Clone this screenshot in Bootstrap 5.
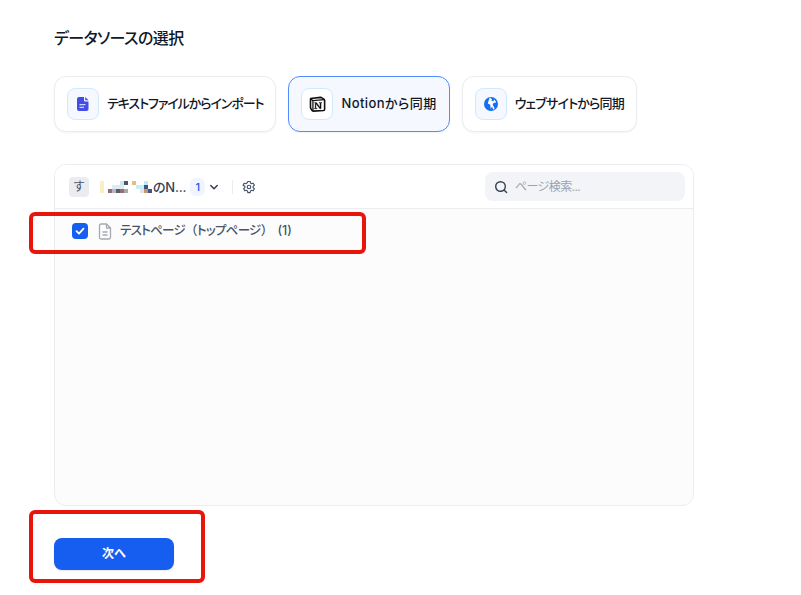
<!DOCTYPE html>
<html lang="ja">
<head>
<meta charset="utf-8">
<title>データソースの選択</title>
<link rel="stylesheet" href="https://cdn.jsdelivr.net/npm/bootstrap@5.3.0/dist/css/bootstrap.min.css">
<style>
html,body{height:100%;overflow:hidden}
body{background:#fff;color:#101828;font-family:Inter,"Noto Sans CJK JP",sans-serif;position:relative;font-feature-settings:"palt"}
.page-wrap{padding:26px 0 0 54px}
.ds-title{font-size:16px;line-height:24px;font-weight:500;color:#101828;margin:0 0 26px;letter-spacing:-.55px}
.ds-options{gap:12px;margin-bottom:32px}
.ds-card{height:56px;padding:0 12px;background:#fff;border:1px solid #eaecf0;border-radius:12px;box-shadow:0 1px 2px rgba(16,24,40,.05);font-size:13px;font-weight:500;color:#101828;gap:8px;white-space:nowrap}
.ds-card.is-active{background:#f5f8ff;border-color:#528bff}
.spc-file{letter-spacing:-1.070px}
.spc-notion{letter-spacing:.42px}
.spc-web{letter-spacing:-.8px}
.ds-ico{width:32px;height:32px;border:1px solid #d1e9ff;border-radius:8px;background:#f5f8ff}
.ds-card.is-active .ds-ico{background:#fff}
.ds-panel{width:640px;height:342px;border:1px solid #eaecf0;border-radius:12px;background:#fcfcfd;overflow:hidden}
.ds-head{height:44px;background:#fff;border-bottom:1px solid #eaecf0;padding:0 8px 0 14px}
.ds-avatar{width:20px;height:20px;border-radius:4px;background:#eaecf0;color:#475467;font-size:12px;line-height:20px;text-align:center}
.ds-name{font-size:13px;font-weight:500;color:#344054;margin-left:11px;line-height:20px;letter-spacing:-.2px}
.ds-count{width:15px;height:18px;border-radius:6px;background:#eff4ff;color:#155eef;font-size:11px;font-weight:500;line-height:18px;text-align:center;margin-left:4px}
.ds-chev{margin-left:3px}
.ds-sep{width:1px;height:14px;background:#eaecf0;margin:0 9px 0 12px}
.ds-search{width:200px;height:29px;background:#f2f4f7;border-radius:8px;padding:0 9px;gap:7px;margin-left:auto;color:#98a2b3;font-size:12px;letter-spacing:-.6px}
.ds-row{height:44px;padding:0 0 0 17px;font-size:12.500px;font-weight:500;color:#475467;white-space:nowrap}
.ds-label{letter-spacing:-.7px}
.ds-fw{font-feature-settings:normal}
.ds-num{margin-left:5px}
.ds-check{width:16px;height:16px;border-radius:4px;background:#155eef;margin-right:10px}
.ds-next{width:120px;height:32px;background:#155eef;border:0;border-radius:8px;color:#fff;font-size:12px;font-weight:600;padding:0;margin-top:32px;box-shadow:0 1px 2px rgba(16,24,40,.1)}
.ds-next:hover{background:#155eef;color:#fff}
.mark-box{position:absolute;border:4px solid #e8150a;border-radius:6px;pointer-events:none}
.mark-row{left:29px;top:212px;width:337px;height:42px}
.mark-btn{left:29px;top:510px;width:176px;height:73px}
</style>
</head>
<body>
<div class="page-wrap">
  <h1 class="ds-title">データソースの選択</h1>
  <div class="d-flex ds-options">
    <div class="ds-card d-flex align-items-center">
      <span class="ds-ico d-flex align-items-center justify-content-center">
        <svg width="14" height="16" viewBox="0 0 14 16"><path fill="#444ce7" d="M3 1h5v3.200c0 .7.6 1.300 1.300 1.300H12.500V13a2 2 0 0 1-2 2H3a2 2 0 0 1-2-2V3a2 2 0 0 1 2-2z"/><path fill="#444ce7" d="M9.200 1l3.300 3.300H9.200z"/><path fill="#c7d7fe" d="M3.500 8h6v1.300h-6zM3.500 10.800h4.500v1.300H3.500z"/></svg>
      </span>
      <span class="spc-file">テキストファイルからインポート</span>
    </div>
    <div class="ds-card is-active d-flex align-items-center">
      <span class="ds-ico d-flex align-items-center justify-content-center">
        <svg width="17" height="17" viewBox="0 0 16 16"><path fill="#fff" stroke="#111" stroke-width="1.500" stroke-linejoin="round" d="M1.500 2.300 10.800 1.300c.6 0 1 .1 1.400.4l2 1.400c.4.300.5.500.5.900v8.400c0 .7-.3 1.100-1 1.200l-9.500.6c-.5 0-.8-.1-1.100-.4l-1.300-1.800c-.3-.4-.4-.7-.4-1.100V3.200c0-.5.200-.8.600-.9z"/><path fill="none" stroke="#111" stroke-width="1.200" d="M1.500 2.500 3.500 4.300 14.500 3.500M3.700 4.500V14"/><path fill="#111" stroke="#111" stroke-width=".3" d="M5.300 6h1.800l3.200 4.700V6.600l-.9-.1V6h2.800v.5l-.8.1V12h-1.200L6.600 7.500v3.900l1 .2v.5H5v-.5l.8-.2V6.600l-.5-.1z"/></svg>
      </span>
      <span class="spc-notion">Notionから同期</span>
    </div>
    <div class="ds-card d-flex align-items-center">
      <span class="ds-ico d-flex align-items-center justify-content-center">
        <svg width="16" height="16" viewBox="0 0 16 16"><circle cx="8" cy="8" r="7" fill="#1570ef"/><path fill="#fff" d="M6.800 1.500 9 3.200 8.400 5l2 .3.700-1.800 1.600 1.700.4 1.300-2.200.3-1.300 1.800 2 4-1.300 1.100-1.300-3.100-1.300 2.400-.4-4.200-2.500-1.200L5.500 5z"/></svg>
      </span>
      <span class="spc-web">ウェブサイトから同期</span>
    </div>
  </div>
  <div class="ds-panel">
    <div class="ds-head d-flex align-items-center">
      <span class="ds-avatar">す</span>
      <span class="d-flex align-items-center ds-name">
        <svg width="53" height="12" viewBox="0 0 53 12" class="flex-shrink-0">
          <rect x="0" y="0" width="4" height="12" fill="#fbeec4"/>
          <rect x="8" y="8" width="4" height="4" fill="#8d6f7e"/>
          <rect x="12" y="8" width="4" height="4" fill="#c4b2b8"/>
          <rect x="16" y="8" width="4" height="4" fill="#555f70"/>
          <rect x="20" y="8" width="4" height="4" fill="#a06a6a"/>
          <rect x="24" y="8" width="4" height="4" fill="#a4adad"/>
          <rect x="12" y="4" width="12" height="4" fill="#dcecf5"/>
          <rect x="20" y="0" width="4" height="4" fill="#cfe6f2"/>
          <rect x="24" y="0" width="4" height="4" fill="#4a5568"/>
          <rect x="32" y="0" width="4" height="4" fill="#e8b98c"/>
          <rect x="44" y="0" width="4" height="4" fill="#bdebf5"/>
          <rect x="36" y="4" width="8" height="4" fill="#c8eef5"/>
          <rect x="44" y="4" width="4" height="4" fill="#3f5488"/>
          <rect x="40" y="8" width="4" height="4" fill="#dfe6ee"/>
          <rect x="44" y="8" width="4" height="4" fill="#c9965f"/>
          <rect x="48" y="8" width="4" height="4" fill="#3f5488"/>
        </svg>
        <span>のN...</span>
      </span>
      <span class="ds-count">1</span>
      <svg class="ds-chev" width="12" height="12" viewBox="0 0 12 12"><path d="M2.800 4.500 6 7.700l3.200-3.200" fill="none" stroke="#344054" stroke-width="1.500" stroke-linecap="round" stroke-linejoin="round"/></svg>
      <span class="ds-sep"></span>
      <svg width="14" height="14" viewBox="0 0 24 24" fill="none" stroke="#475467" stroke-width="2" stroke-linejoin="round"><circle cx="12" cy="12" r="3"/><path d="M10 2.500h4l.6 2.800 1.900 1.100 2.700-.9 2 3.500-2.100 1.900v2.200l2.100 1.900-2 3.500-2.700-.9-1.900 1.100-.6 2.800h-4l-.6-2.800-1.900-1.100-2.700.9-2-3.500 2.100-1.900v-2.200L1.800 9 3.800 5.500l2.700.9 1.900-1.100z"/></svg>
      <div class="ds-search d-flex align-items-center">
        <svg width="14" height="14" viewBox="0 0 14 14" fill="none" stroke="#344054" stroke-width="1.400" stroke-linecap="round"><circle cx="6.500" cy="6.500" r="4.800"/><path d="m10 10 2.600 2.600"/></svg>
        <span>ページ検索...</span>
      </div>
    </div>
    <div class="ds-row d-flex align-items-center">
      <span class="ds-check d-flex align-items-center justify-content-center">
        <svg width="12" height="12" viewBox="0 0 12 12"><path d="M2.500 6.200 5 8.700l4.500-5" fill="none" stroke="#fff" stroke-width="1.800" stroke-linecap="round" stroke-linejoin="round"/></svg>
      </span>
      <svg class="me-2" width="14" height="17" viewBox="0 0 14 17" fill="none" stroke="#a5a9ae" stroke-width="1.300" stroke-linejoin="round"><path d="M8.500 1H3a1.500 1.500 0 0 0-1.500 1.500v12A1.500 1.500 0 0 0 3 16h8a1.500 1.500 0 0 0 1.500-1.500V5z"/><path d="M8.500 1v4h4M4.500 9h5M4.500 12h5"/></svg>
      <span class="ds-label">テストページ<span class="ds-fw">（</span>トップページ<span class="ds-fw">）</span></span>
      <span class="ds-num">(1)</span>
    </div>
  </div>
  <button type="button" class="btn ds-next d-block">次へ</button>
</div>
<div class="mark-box mark-row"></div>
<div class="mark-box mark-btn"></div>
<script src="https://cdn.jsdelivr.net/npm/bootstrap@5.3.0/dist/js/bootstrap.bundle.min.js"></script>
</body>
</html>
